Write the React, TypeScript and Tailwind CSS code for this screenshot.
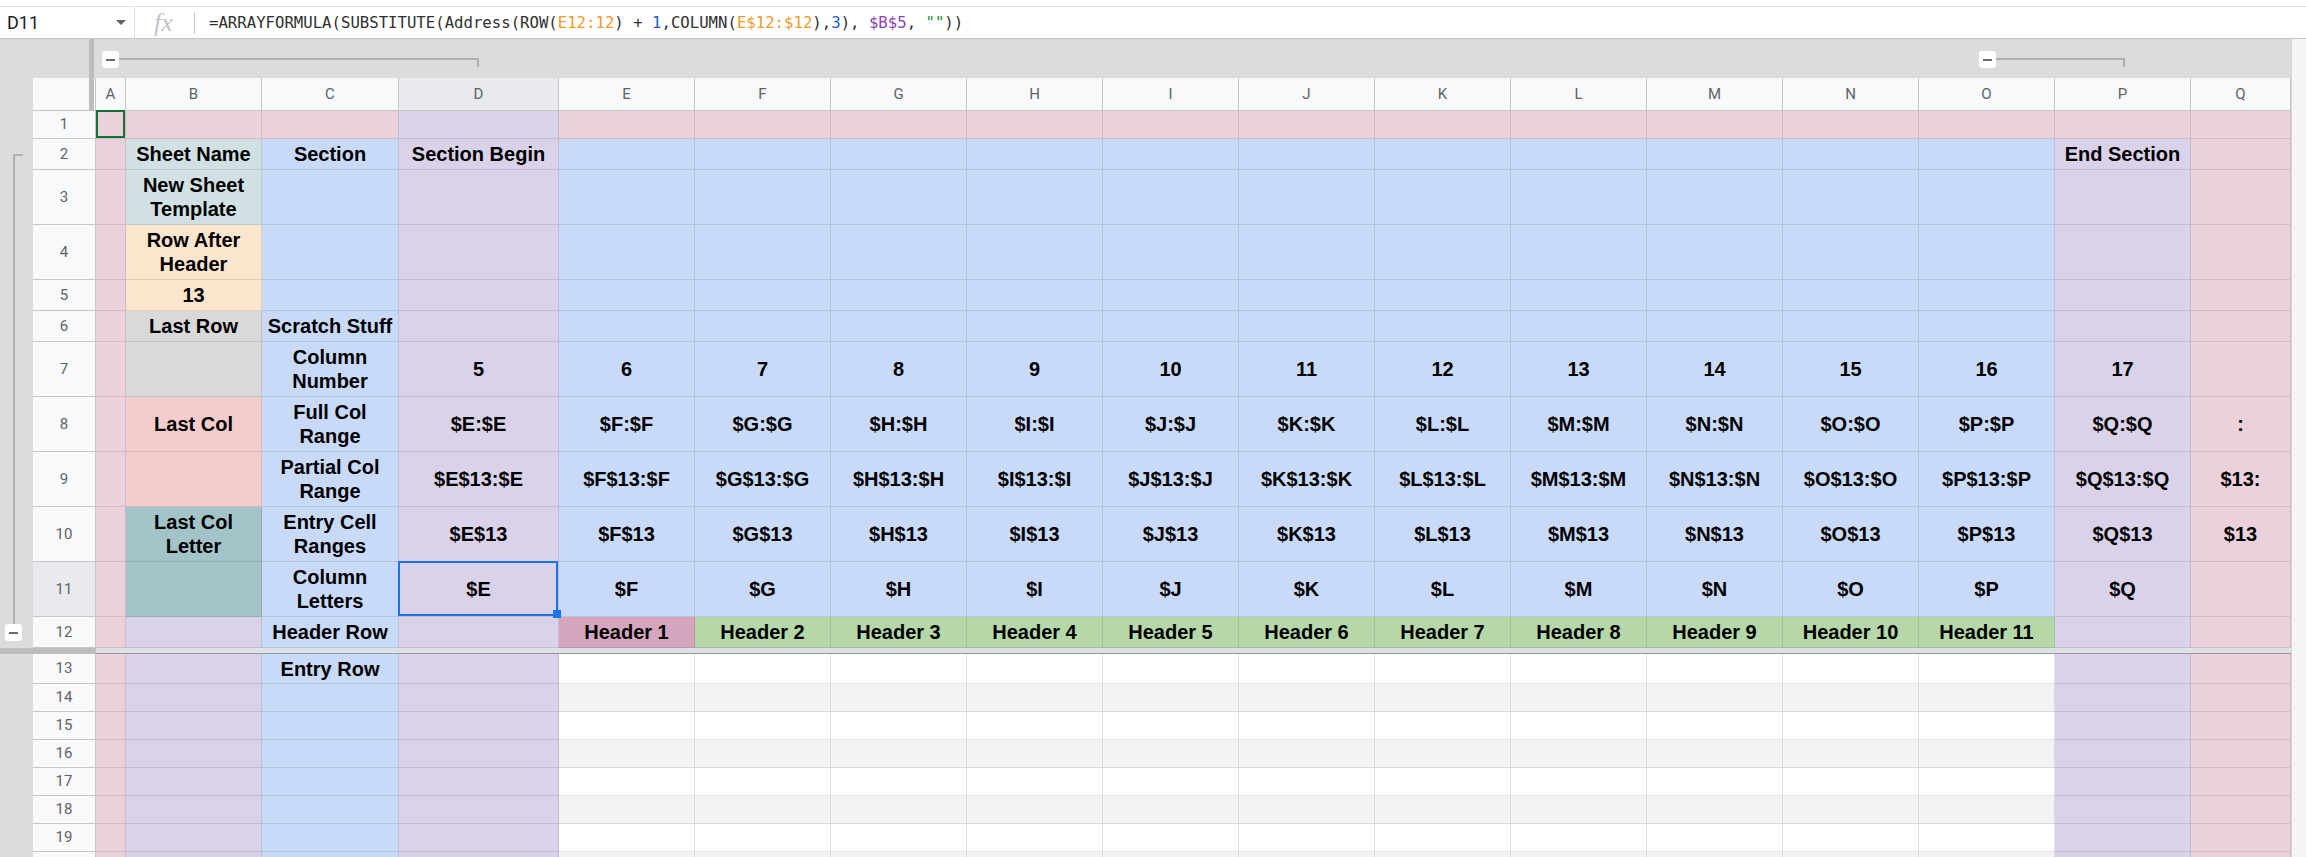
import React from "react";

const LETTERS = "ABCDEFGHIJKLMNOPQ".split("");

const COL_W = [
  "w-[30px]",
  "w-[136px]",
  "w-[137px]",
  "w-[160px]",
  "w-[136px]",
  "w-[136px]",
  "w-[136px]",
  "w-[136px]",
  "w-[136px]",
  "w-[136px]",
  "w-[136px]",
  "w-[136px]",
  "w-[136px]",
  "w-[136px]",
  "w-[136px]",
  "w-[136px]",
  "w-[100px]",
];

const BG = {
  pink: "bg-[#ead1dc]",
  blue: "bg-[#c9daf8]",
  lav: "bg-[#d9d2e9]",
  cyan3: "bg-[#d0e0e3]",
  peach: "bg-[#fce5cd]",
  grey: "bg-[#d9d9d9]",
  red3: "bg-[#f4cccc]",
  cyan2: "bg-[#a2c4c9]",
  mag2: "bg-[#d5a6bd]",
  green2: "bg-[#b6d7a8]",
  white: "bg-white",
  alt: "bg-[#f3f3f3]",
};

const ROW_H: Record<number, string> = {
  1: "h-[28px]",
  2: "h-[31px]",
  3: "h-[55px]",
  4: "h-[55px]",
  5: "h-[31px]",
  6: "h-[31px]",
  7: "h-[55px]",
  8: "h-[55px]",
  9: "h-[55px]",
  10: "h-[55px]",
  11: "h-[55px]",
  12: "h-[31px]",
  13: "h-[30px]",
};

function bgFor(r: number, c: number): string {
  if (c === 0 || c === 16) return BG.pink;
  if (r === 1) return c === 3 ? BG.lav : BG.pink;
  if (c === 1) {
    if (r === 2 || r === 3) return BG.cyan3;
    if (r === 4 || r === 5) return BG.peach;
    if (r === 6 || r === 7) return BG.grey;
    if (r === 8 || r === 9) return BG.red3;
    if (r === 10 || r === 11) return BG.cyan2;
    return BG.lav;
  }
  if (c === 2) return BG.blue;
  if (c === 3 || c === 15) return BG.lav;
  if (r <= 11) return BG.blue;
  if (r === 12) return c === 4 ? BG.mag2 : BG.green2;
  return r % 2 === 0 ? BG.alt : BG.white;
}

const LABELS: Record<number, Record<number, string>> = {
  2: { 1: "Sheet Name", 2: "Section", 3: "Section Begin", 15: "End Section" },
  3: { 1: "New Sheet\nTemplate" },
  4: { 1: "Row After\nHeader" },
  5: { 1: "13" },
  6: { 1: "Last Row", 2: "Scratch Stuff" },
  7: { 2: "Column\nNumber" },
  8: { 1: "Last Col", 2: "Full Col\nRange", 16: ":" },
  9: { 2: "Partial Col\nRange", 16: "$13:" },
  10: { 1: "Last Col\nLetter", 2: "Entry Cell\nRanges", 16: "$13" },
  11: { 2: "Column\nLetters" },
  12: { 2: "Header Row" },
  13: { 2: "Entry Row" },
};

function textFor(r: number, c: number): string {
  const lab = LABELS[r]?.[c];
  if (lab !== undefined) return lab;
  if (c >= 3 && c <= 15) {
    const L = LETTERS[c + 1];
    if (r === 7) return String(c + 2);
    if (r === 8) return `$${L}:$${L}`;
    if (r === 9) return `$${L}$13:$${L}`;
    if (r === 10) return `$${L}$13`;
    if (r === 11) return `$${L}`;
  }
  if (r === 12 && c >= 4 && c <= 14) return `Header ${c - 3}`;
  return "";
}

function Minus() {
  return (
    <div className="flex h-[17px] w-[17px] items-center justify-center rounded-[3px] bg-white">
      <div className="h-[2px] w-[9px] bg-[#6b6b6b]" />
    </div>
  );
}

function FormulaBar() {
  return (
    <>
      <div className="h-[6px] bg-white" />
      <div className="flex h-[33px] items-center border-t border-b border-t-[#e0e0e0] border-b-[#c4c4c4] bg-white">
        <div className="relative flex h-full w-[134px] items-center pl-[7px]">
          <span className="font-['Roboto',sans-serif] text-[18px] text-[#202124]">D11</span>
          <svg className="absolute left-[116px] top-[13px]" width="10" height="6" viewBox="0 0 10 6">
            <polygon points="0,0 10,0 5,5" fill="#5f6368" />
          </svg>
        </div>
        <div className="h-full w-[1px] bg-[#e0e0e0]" />
        <div className="flex h-full w-[59px] items-center pl-[19px]">
          <span className="font-['Liberation_Serif',serif] text-[26px] italic leading-none text-[#c4c4c4]">fx</span>
        </div>
        <div className="h-[22px] w-[1px] bg-[#c8c8c8]" />
        <div className="pl-[14px] font-['DejaVu_Sans_Mono',monospace] text-[15.66px] whitespace-pre text-[#303030]">
          <span>=ARRAYFORMULA(SUBSTITUTE(Address(ROW(</span>
          <span className="text-[#f39a2b]">E12:12</span>
          <span>) + </span>
          <span className="text-[#1a5fcc]">1</span>
          <span>,COLUMN(</span>
          <span className="text-[#f39a2b]">E$12:$12</span>
          <span>),</span>
          <span className="text-[#1a5fcc]">3</span>
          <span>), </span>
          <span className="text-[#8e44ad]">$B$5</span>
          <span>, </span>
          <span className="text-[#1e8e3e]">""</span>
          <span>))</span>
        </div>
      </div>
    </>
  );
}

function GroupBar() {
  return (
    <div className="relative h-[39px] shrink-0 bg-[#dcdcdc]">
      <div className="absolute left-[89px] top-0 h-full w-[5px] bg-[#bdbdbd]" />
      <div className="absolute left-[102px] top-[12px]">
        <Minus />
      </div>
      <div className="absolute left-[119px] top-[19px] h-[2px] w-[360px] bg-[#b0b0b0]" />
      <div className="absolute left-[477px] top-[19px] h-[9px] w-[2px] bg-[#b0b0b0]" />
      <div className="absolute left-[1979px] top-[12px]">
        <Minus />
      </div>
      <div className="absolute left-[1996px] top-[19px] h-[2px] w-[129px] bg-[#b0b0b0]" />
      <div className="absolute left-[2123px] top-[19px] h-[9px] w-[2px] bg-[#b0b0b0]" />
    </div>
  );
}

function HeaderRow() {
  return (
    <div className="flex h-[33px] shrink-0">
      <div className="w-[33px] bg-[#dcdcdc]" />
      <div className="w-[56px] border-b border-[#c4c7c5] bg-[#f8f9fa]" />
      <div className="w-[5px] bg-[#bdbdbd]" />
      <div className="w-[2px] border-r border-b border-[#c4c7c5] bg-[#f8f9fa]" />
      {LETTERS.map((L, c) => (
        <div
          key={L}
          className={`${COL_W[c]} flex items-center justify-center border-r border-b border-[#c4c7c5] font-['Roboto',sans-serif] text-[15px] text-[#5f6368] ${
            c === 3 ? "bg-[#e8eaed]" : "bg-[#f8f9fa]"
          }`}
        >
          {L}
        </div>
      ))}
    </div>
  );
}

function Row({ n, showNum = true }: { n: number; showNum?: boolean }) {
  const h = ROW_H[n] ?? "h-[28px]";
  return (
    <div className={`flex shrink-0 ${h}`}>
      <div className="w-[33px] bg-[#dcdcdc]" />
      <div
        className={`flex w-[63px] items-center justify-center border-r border-b border-[#c4c7c5] font-['Roboto',sans-serif] text-[15px] text-[#5f6368] ${
          n === 11 ? "bg-[#e8eaed]" : "bg-[#f8f9fa]"
        }`}
      >
        {showNum ? n : null}
      </div>
      {LETTERS.map((L, c) => {
        const t = textFor(n, c);
        return (
          <div
            key={L}
            className={`relative ${COL_W[c]} ${bgFor(n, c)} flex items-center justify-center border-r border-b border-black/10 text-center font-bold text-[20px] leading-[24px] whitespace-pre-line text-black`}
          >
            {t}
            {n === 1 && c === 0 && (
              <div className="absolute -top-[1px] left-0 right-0 bottom-0 z-10 border-2 border-[#137333]" />
            )}
            {n === 11 && c === 3 && (
              <div className="absolute -left-[1px] -top-[1px] right-0 bottom-0 z-10 border-2 border-[#1a73e8]">
                <div className="absolute -right-[5px] -bottom-[4px] h-[8px] w-[8px] bg-[#1a73e8]" />
              </div>
            )}
          </div>
        );
      })}
    </div>
  );
}

function FreezeBar() {
  return (
    <div className="flex h-[6px] shrink-0">
      <div className="w-[96px] bg-[#bdbdbd]" />
      <div className="flex-1 border-b border-[#9a9a9a] bg-[#dde1e5]" />
    </div>
  );
}

export default function App() {
  const top = [1, 2, 3, 4, 5, 6, 7, 8, 9, 10, 11, 12];
  const bottom = [13, 14, 15, 16, 17, 18, 19];
  return (
    <div className="relative h-[857px] w-[2306px] overflow-hidden bg-white font-['Liberation_Sans',Arial,sans-serif]">
      <FormulaBar />
      <div className="flex">
        <div className="relative flex w-[2291px] flex-col bg-[#dcdcdc]">
          <GroupBar />
          <HeaderRow />
          {top.map((n) => (
            <Row key={n} n={n} />
          ))}
          <FreezeBar />
          {bottom.map((n) => (
            <Row key={n} n={n} />
          ))}
          <Row n={20} showNum={false} />
          {/* row group bracket */}
          <div className="absolute left-[13px] top-[115px] h-[2px] w-[10px] bg-[#b0b0b0]" />
          <div className="absolute left-[13px] top-[115px] h-[470px] w-[2px] bg-[#b0b0b0]" />
          <div className="absolute left-[5px] top-[585px]">
            <Minus />
          </div>
        </div>
        <div className="h-[818px] w-[15px] border-l border-[#d6d6d6] bg-[#f5f5f5]" />
      </div>
    </div>
  );
}
